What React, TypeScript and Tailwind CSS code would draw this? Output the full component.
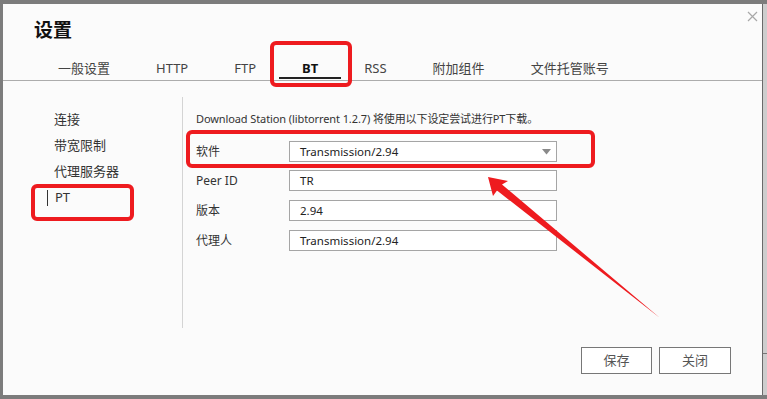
const tabs = ['一般设置', 'HTTP', 'FTP', 'BT', 'RSS', '附加组件', '文件托管账号'];
const navItems = ['连接', '带宽限制', '代理服务器', 'PT'];

const fields = [
  { label: 'Peer ID', value: 'TR' },
  { label: '版本', value: '2.94' },
  { label: '代理人', value: 'Transmission/2.94' },
];

export default function App() {
  return (
    <div className="relative w-[767px] h-[399px] overflow-hidden bg-[#7c7c7c] font-['Noto_Sans','Noto_Sans_CJK_SC',sans-serif] text-[#333]">
      <div className="flex pt-[4px] pl-[3px]">
        {/* dialog */}
        <div className="relative w-[759px] h-[391px] bg-[#fbfbfb] flex flex-col">
          <svg className="absolute right-[4px] top-[7px]" width="11" height="11" viewBox="0 0 11 11">
            <path d="M1 1 L10 10 M10 1 L1 10" stroke="#a8a8a8" strokeWidth="1.2" />
          </svg>

          <div className="h-[52px] pl-[31px] pt-[14px]">
            <h1 className="text-[19px] leading-[24px] font-bold text-[#111]">设置</h1>
          </div>

          <div className="flex h-[25px] pl-[32px] border-b border-[#acacac]">
            {tabs.map((t) => (
              <div
                key={t}
                className={
                  'relative px-[23px] flex items-center text-[13px] leading-none ' +
                  (t === 'BT' ? 'font-bold text-[#111]' : 'text-[#444]')
                }
              >
                {t}
                {t === 'BT' && <div className="absolute left-0 right-0 bottom-[1px] h-[2px] bg-[#222]" />}
              </div>
            ))}
          </div>

          <div className="flex h-[266px]">
            <div className="w-[179px] pl-[44px] pt-[26px]">
              {navItems.map((n) => (
                <div key={n} className="h-[26px] flex items-center text-[13px] text-[#333]">
                  {n === 'PT' ? (
                    <>
                      <span className="w-[1px] h-[16px] bg-[#333] mr-[7px]" />
                      <span>PT</span>
                    </>
                  ) : (
                    <span className="pl-[7px]">{n}</span>
                  )}
                </div>
              ))}
            </div>
            <div className="pt-[16px]">
              <div className="w-[1px] h-[231px] bg-[#d4d4d4]" />
            </div>
            <div className="pl-[13px] pt-[30px] flex flex-col">
              <p className="text-[11px] leading-[16px] text-[#333] mb-[14px] tracking-[-0.1px]">
                Download Station (libtorrent 1.2.7) 将使用以下设定尝试进行PT下载。
              </p>
              <div className="flex items-center h-[21px] mb-[8px]">
                <span className="w-[93px] text-[12px] text-[#333]">软件</span>
                <div className="relative w-[268px] h-[21px] border border-[#a5a5a5] bg-white flex items-center pl-[10px] text-[11.5px] text-[#222]">
                  Transmission/2.94
                  <svg className="absolute right-[5px] top-[7px]" width="9" height="6" viewBox="0 0 9 6">
                    <path d="M0 0 H9 L4.5 5.5 Z" fill="#8a8a8a" />
                  </svg>
                </div>
              </div>
              {fields.map((f) => (
                <div key={f.label} className="flex items-center h-[21px] mb-[9px]">
                  <span className="w-[93px] text-[12px] text-[#333]">{f.label}</span>
                  <div className="w-[268px] h-[21px] border border-[#a5a5a5] bg-white flex items-center pl-[10px] text-[11.5px] text-[#222]">
                    {f.value}
                  </div>
                </div>
              ))}
            </div>
          </div>

          <div className="flex justify-end gap-[7px] pr-[31px]">
            <button className="w-[71px] h-[27px] border border-[#777] bg-white text-[13px] text-[#555]">保存</button>
            <button className="w-[72px] h-[27px] border border-[#777] bg-white text-[13px] text-[#555]">关闭</button>
          </div>
        </div>

        {/* page behind, right edge */}
        <div className="w-[5px] h-[391px] border-l border-[#6a6a6a] bg-[#cdcdcd] flex flex-col">
          <div className="h-[349px]" />
          <div className="h-[1px] bg-[#777]" />
        </div>
      </div>

      {/* annotations */}
      <div className="absolute left-[270px] top-[41px] w-[82px] h-[46px] border-[4px] border-[#ee1b1f] rounded-[6px]" />
      <div className="absolute left-[186px] top-[130px] w-[409px] h-[38px] border-[4px] border-[#ee1b1f] rounded-[6px]" />
      <div className="absolute left-[31px] top-[184px] w-[103px] h-[37px] border-[4px] border-[#ee1b1f] rounded-[6px]" />
      <svg className="absolute left-0 top-0" width="767" height="399" viewBox="0 0 767 399">
        <polygon points="488,177 508,181 502,184.5 660,318 497,190.5 493,196" fill="#ee1b1f" />
      </svg>
    </div>
  );
}
